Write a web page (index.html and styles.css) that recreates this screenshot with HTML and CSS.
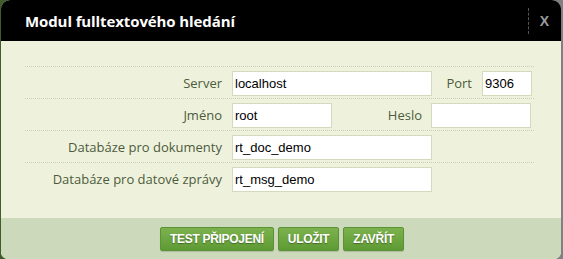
FILE: index.html
```html
<!DOCTYPE html>
<html>
<head>
  <title>Modul fulltextového hledání</title>
  <link rel="stylesheet" href="styles.css">
</head>

<body>
  <div class="dialog">
    <div class="dialog-head">
      <h1>Modul fulltextového hledání</h1>
      <span class="close">X</span>
    </div>

    <div class="dialog-body">
      <div class="row">
        <label class="lbl">Server</label>
        <input class="field wide" type="text" value="localhost">
        <label class="lbl small">Port</label>
        <input class="field tiny" type="text" value="9306">
      </div>
      <div class="row">
        <label class="lbl">Jméno</label>
        <input class="field mid" type="text" value="root">
        <label class="lbl heslo">Heslo</label>
        <input class="field mid" type="password" value="">
      </div>
      <div class="row">
        <label class="lbl">Databáze pro dokumenty</label>
        <input class="field wide" type="text" value="rt_doc_demo">
      </div>
      <div class="row">
        <label class="lbl">Databáze pro datové zprávy</label>
        <input class="field wide" type="text" value="rt_msg_demo">
      </div>
    </div>

    <div class="dialog-foot">
      <button>TEST PŘIPOJENÍ</button>
      <button>ULOŽIT</button>
      <button>ZAVŘÍT</button>
    </div>
  </div>
</body>
</html>
```

FILE: styles.css
```css
body {
  margin: 0;
  padding: 0;
  background: linear-gradient(90deg, #3f5c2a 0%, #5c6a50 40%, #808080 100%);
  font-family: 'Open Sans', sans-serif;
  height: 259px;
  overflow: hidden;
}
.dialog {
  width: 560px;
  margin-left: 1px;
  height: 259px;
  border-radius: 9px 9px 7px 7px;
  overflow: hidden;
  background: #eef2dc;
}
.dialog-head {
  height: 41px;
  background: #000;
  display: flex;
  align-items: center;
  position: relative;
}
.dialog-head h1 {
  margin: 0 0 0 24px;
  font-size: 15px;
  font-weight: bold;
  color: #fff;
  flex: 1;
  letter-spacing: -0.1px;
}
.close {
  width: 31px;
  height: 26px;
  border-left: 1px dashed #555;
  color: #9a9a9a;
  font-family: 'Liberation Sans', Arial, sans-serif;
  font-weight: bold;
  font-size: 14px;
  display: flex;
  align-items: center;
  justify-content: center;
  margin-right: 1px;
}
.dialog-body {
  height: 177px;
  box-sizing: border-box;
  padding: 25px 27px 0 24px;
}
.row {
  display: flex;
  align-items: center;
  height: 32px;
  box-sizing: border-box;
  border-top: 1px dotted #c9d1b2;
  padding-top: 1px;
}
.lbl {
  width: 197px;
  text-align: right;
  padding-right: 10px;
  font-size: 13px;
  color: #4d5a3c;
}
.lbl.small {
  width: 40px;
  padding-right: 10px;
}
.lbl.heslo {
  width: 90px;
  padding-right: 9px;
}
.field {
  height: 25px;
  box-sizing: border-box;
  border: 1px solid #d3dbbd;
  background: #fff;
  font-family: 'Liberation Sans', Arial, sans-serif;
  font-size: 13px;
  color: #000;
  padding: 0 2px;
  margin: 0;
  outline: none;
}
.field.wide {
  width: 200px;
}
.field.mid {
  width: 100px;
}
.field.tiny {
  width: 50px;
}
.dialog-foot {
  height: 41px;
  background: #cdd9bb;
  display: flex;
  justify-content: center;
  align-items: flex-start;
  gap: 4px;
  padding-top: 9px;
  box-sizing: border-box;
  padding-left: 2px;
}
button {
  height: 24px;
  padding: 0 9px;
  border: 1px solid #5a9236;
  border-radius: 2px;
  background: linear-gradient(#7cb24d, #5e9a34);
  color: #fff;
  font-family: 'Liberation Sans', Arial, sans-serif;
  font-size: 12px;
  font-weight: bold;
  letter-spacing: -0.3px;
  text-shadow: 0 1px 1px rgba(0, 0, 0, 0.35);
  box-shadow: 0 1px 1px rgba(0, 0, 0, 0.15);
  cursor: pointer;
}
```
